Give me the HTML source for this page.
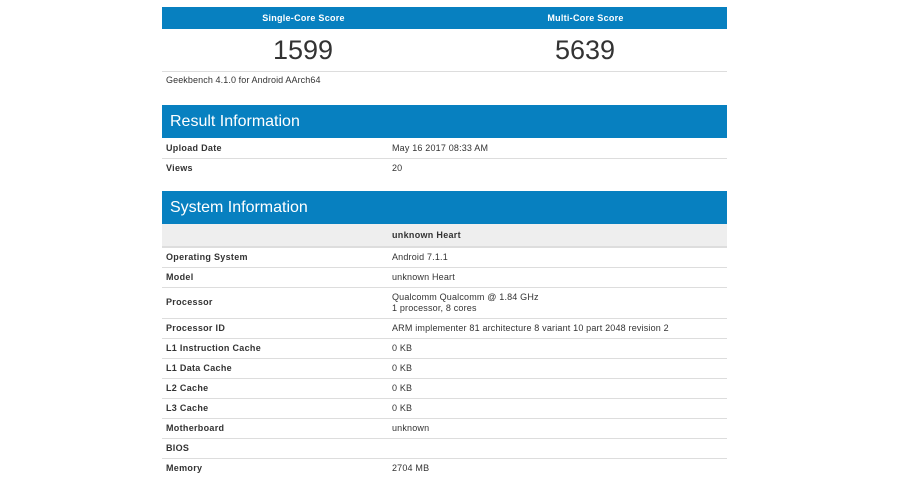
<!DOCTYPE html>
<html>
<head>
<meta charset="utf-8">
<style>
html,body{margin:0;padding:0;background:#fff;}
body{width:905px;height:490px;overflow:hidden;position:relative;font-family:"Liberation Sans",Arial,sans-serif;color:#333;font-size:9px;}
.b{position:absolute;}
.t{position:absolute;white-space:nowrap;line-height:12px;font-size:9px;letter-spacing:.18px;}
.k{font-weight:bold;left:166px;letter-spacing:.3px;}
.v{left:392px;}
.bar{position:absolute;left:162px;width:565px;background:#0780c0;}
.ln{position:absolute;left:162px;width:565px;height:1px;background:#ddd;}
.h{position:absolute;left:170px;color:#fff;font-size:16px;line-height:33px;white-space:nowrap;}
.sc{position:absolute;font-size:27px;line-height:32px;width:200px;text-align:center;}
.st{position:absolute;width:283px;text-align:center;color:#fff;font-weight:bold;font-size:9px;letter-spacing:.27px;line-height:12px;white-space:nowrap;}
</style>
</head>
<body>
<div class="bar" style="top:7px;height:22px;"></div>
<div class="st" style="left:162px;top:12px;">Single-Core Score</div>
<div class="st" style="left:444px;top:12px;">Multi-Core Score</div>
<div class="sc" style="left:203px;top:34px;">1599</div>
<div class="sc" style="left:485px;top:34px;">5639</div>
<div class="ln" style="top:71px;"></div>
<div class="t" style="left:166px;top:74px;letter-spacing:.1px;">Geekbench 4.1.0 for Android AArch64</div>

<div class="bar" style="top:105px;height:33px;"></div>
<div class="h" style="top:105px;">Result Information</div>
<div class="t k" style="top:142px;">Upload Date</div>
<div class="t v" style="top:142px;">May 16 2017 08:33 AM</div>
<div class="ln" style="top:158px;"></div>
<div class="t k" style="top:162px;">Views</div>
<div class="t v" style="top:162px;">20</div>

<div class="bar" style="top:191px;height:33px;"></div>
<div class="h" style="top:191px;">System Information</div>
<div class="b" style="left:162px;top:224px;width:565px;height:22px;background:#eee;"></div>
<div class="b" style="left:162px;top:246px;width:565px;height:2px;background:#ddd;"></div>
<div class="t v" style="top:229px;font-weight:bold;letter-spacing:.3px;">unknown Heart</div>

<div class="t k" style="top:251px;">Operating System</div>
<div class="t v" style="top:251px;">Android 7.1.1</div>
<div class="ln" style="top:267px;"></div>
<div class="t k" style="top:271px;">Model</div>
<div class="t v" style="top:271px;">unknown Heart</div>
<div class="ln" style="top:287px;"></div>
<div class="t k" style="top:296px;">Processor</div>
<div class="t v" style="top:291px;">Qualcomm Qualcomm @ 1.84 GHz</div>
<div class="t v" style="top:302px;">1 processor, 8 cores</div>
<div class="ln" style="top:318px;"></div>
<div class="t k" style="top:322px;">Processor ID</div>
<div class="t v" style="top:322px;">ARM implementer 81 architecture 8 variant 10 part 2048 revision 2</div>
<div class="ln" style="top:338px;"></div>
<div class="t k" style="top:342px;">L1 Instruction Cache</div>
<div class="t v" style="top:342px;">0 KB</div>
<div class="ln" style="top:358px;"></div>
<div class="t k" style="top:362px;">L1 Data Cache</div>
<div class="t v" style="top:362px;">0 KB</div>
<div class="ln" style="top:378px;"></div>
<div class="t k" style="top:382px;">L2 Cache</div>
<div class="t v" style="top:382px;">0 KB</div>
<div class="ln" style="top:398px;"></div>
<div class="t k" style="top:402px;">L3 Cache</div>
<div class="t v" style="top:402px;">0 KB</div>
<div class="ln" style="top:418px;"></div>
<div class="t k" style="top:422px;">Motherboard</div>
<div class="t v" style="top:422px;">unknown</div>
<div class="ln" style="top:438px;"></div>
<div class="t k" style="top:442px;">BIOS</div>
<div class="ln" style="top:458px;"></div>
<div class="t k" style="top:462px;">Memory</div>
<div class="t v" style="top:462px;">2704 MB</div>
</body>
</html>
